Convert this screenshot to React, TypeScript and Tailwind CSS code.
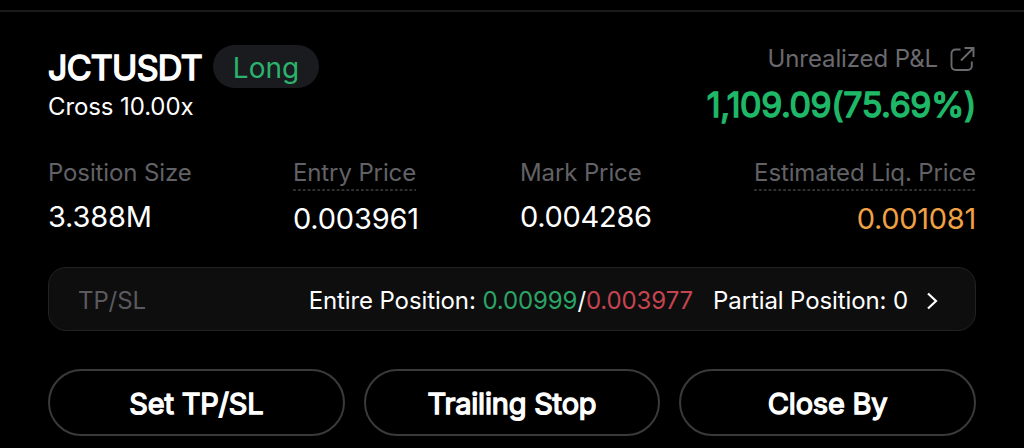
import React from "react";

interface StatProps {
  label: string;
  value: string;
  hint?: boolean;
  className?: string;
  valueClass?: string;
}

const stats: StatProps[] = [
  { label: "Position Size", value: "3.388M", className: "w-[245px] items-start" },
  { label: "Entry Price", value: "0.003961", hint: true, className: "w-[227px] items-start" },
  { label: "Mark Price", value: "0.004286", className: "w-[200px] items-start", valueClass: "text-white tracking-[-0.3px]" },
  { label: "Estimated Liq. Price", value: "0.001081", hint: true, className: "ml-auto items-end", valueClass: "text-[#f0a045] tracking-[-0.3px]" },
];

const actions = ["Set TP/SL", "Trailing Stop", "Close By"];

function ShareIcon() {
  return (
    <svg width="26" height="26" viewBox="0 0 26 26" fill="none" stroke="#6a6a6e" strokeWidth="1.9">
      <path d="M10.5 3.5H5.5a4 4 0 0 0-4 4V20a4 4 0 0 0 4 4h12.3a4 4 0 0 0 4-4v-4.5" />
      <path d="M14.5 2h9v9M23.5 2 11 14.5" />
    </svg>
  );
}

function Stat({ label, value, hint, className = "", valueClass = "text-white tracking-[-0.2px]" }: StatProps) {
  return (
    <div className={`flex flex-col ${className}`}>
      <div className="relative">
        <span className="block text-[24px] leading-8 tracking-[-0.12px] whitespace-nowrap text-[#626266]">{label}</span>
        {hint && (
          <svg className="absolute top-8 left-0 w-full h-[2px]">
            <line x1="0" y1="1" x2="100%" y2="1" stroke="#3f3f43" strokeWidth="1.6" strokeDasharray="2.9 1.95" />
          </svg>
        )}
      </div>
      <span className={`text-[29px] leading-9 ${hint ? "mt-3" : "mt-2.5"} ${valueClass}`}>{value}</span>
    </div>
  );
}

export default function App() {
  return (
    <div className="w-[1024px] h-[448px] overflow-hidden bg-black pt-2.5 text-white font-['Inter',sans-serif]">
      <div className="h-[447px] border-t-2 border-[#1a1a1b] px-12 pt-[31px]">
        <header className="flex h-[85px] justify-between">
          <div>
            <div className="flex h-[47px] items-center gap-[11px]">
              <h1 className="w-[154px] pt-0.5 text-[34px] leading-10 tracking-[-0.7px] whitespace-nowrap [-webkit-text-stroke:1.6px_white]">
                JCTUSDT
              </h1>
              <span className="flex h-[43px] w-[106px] items-center justify-center rounded-full bg-[#191b1f] pt-0.5 text-[28px] text-[#2bb26c]">
                Long
              </span>
            </div>
            <p className="pt-px text-[24px] leading-8 tracking-[-0.1px]">Cross 10.00x</p>
          </div>
          <div className="flex flex-col items-end">
            <div className="flex h-8 items-center gap-3 text-[24px] tracking-[-0.1px] text-[#6a6a6e]">
              <span>Unrealized P&amp;L</span>
              <ShareIcon />
            </div>
            <p className="mt-2.5 text-[34px] leading-10 tracking-[-0.4px] text-[#1fb868] [-webkit-text-stroke:1.4px_#1fb868]">
              1,109.09(75.69%)
            </p>
          </div>
        </header>

        <section className="mt-[29px] flex h-[84px]">
          {stats.map((stat) => (
            <Stat key={stat.label} {...stat} />
          ))}
        </section>

        <section className="mt-[26px] flex h-16 items-center rounded-[18px] border border-[#222224] bg-[#0e0e0f] pt-[3px] pr-[37px] pl-[29px] text-[24px] tracking-[-0.11px]">
          <span className="text-[#5a5a5e]">TP/SL</span>
          <span className="ml-auto">
            Entire Position: <span className="text-[#2ba566]">0.00999</span>/<span className="text-[#c64450]">0.003977</span>
          </span>
          <span className="ml-5">Partial Position: 0</span>
          <svg className="ml-[18px]" width="12" height="18" viewBox="0 0 12 18" fill="none" stroke="white" strokeWidth="2.2">
            <path d="m2 1.5 8 7.5-8 7.5" />
          </svg>
        </section>

        <section className="mt-[38px] grid grid-cols-3 gap-[19px]">
          {actions.map((action) => (
            <button
              key={action}
              className="h-[67px] rounded-full border-2 border-[#3a3a3c] pt-0.5 text-[29px] tracking-[-0.2px] [-webkit-text-stroke:1.4px_white]"
            >
              {action}
            </button>
          ))}
        </section>
      </div>
    </div>
  );
}
